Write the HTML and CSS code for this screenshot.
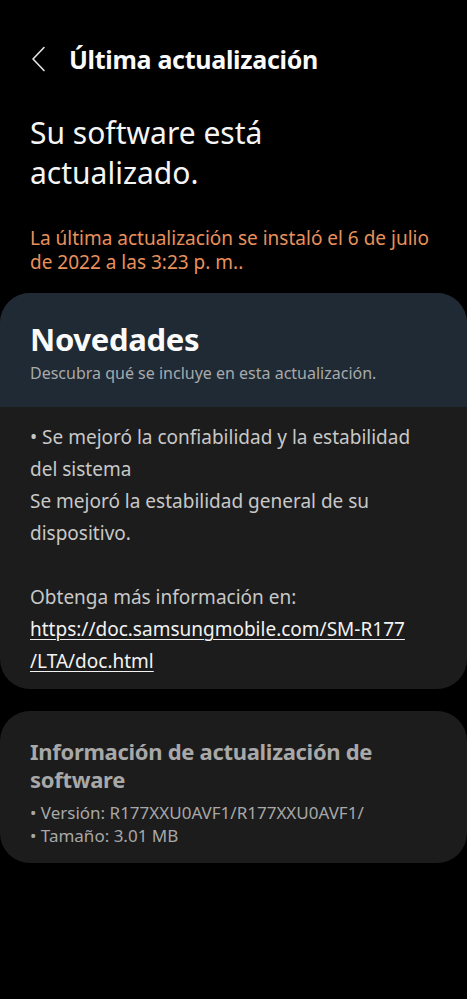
FILE: index.html
```html
<!DOCTYPE html>
<html lang="es">
<head>
<meta charset="utf-8">
<link rel="stylesheet" href="styles.css">
</head>
<body>
<div class="screen">
  <header class="appbar">
    <svg class="back" width="16" height="26" viewBox="0 0 16 26"><path d="M13 1.5 L2 13 L13 24.5" fill="none" stroke="#e6e6e6" stroke-width="1.6" stroke-linecap="round" stroke-linejoin="round"/></svg>
    <h1 class="title">Última actualización</h1>
  </header>
  <h2 class="headline">Su software está<br>actualizado.</h2>
  <p class="installed">La última actualización se instaló el 6 de julio de 2022 a las 3:23 p. m..</p>

  <section class="card news">
    <div class="news-head">
      <h3 class="news-title">Novedades</h3>
      <p class="news-sub">Descubra qué se incluye en esta actualización.</p>
    </div>
    <div class="news-body">
      <p>• Se mejoró la confiabilidad y la estabilidad del sistema<br>Se mejoró la estabilidad general de su dispositivo.</p>
      <p class="more">Obtenga más información en:<br><a class="link">https://doc.samsungmobile.com/SM-R177<br>/LTA/doc.html</a></p>
    </div>
  </section>

  <section class="card info">
    <h3 class="info-title">Información de actualización de software</h3>
    <ul class="info-list">
      <li>• Versión: R177XXU0AVF1/R177XXU0AVF1/</li>
      <li>• Tamaño: 3.01 MB</li>
    </ul>
  </section>
</div>
</body>
</html>
```
FILE: styles.css
```css
* { box-sizing: border-box; margin: 0; padding: 0; }
html, body { background: #000; }
body {
  width: 467px;
  height: 999px;
  overflow: hidden;
  font-family: "Noto Sans", "Open Sans", sans-serif;
  color: #fff;
}
.screen { display: flex; flex-direction: column; }
.appbar {
  display: flex;
  align-items: center;
  height: 42px;
  margin-top: 38px;
  padding-left: 31px;
  gap: 22px;
}
.back { flex: none; }
.title {
  font-size: 25px;
  font-weight: 700;
  letter-spacing: -0.3px;
  color: #fafafa;
}
.headline {
  margin-top: 33px;
  padding: 0 30px;
  font-size: 30px;
  line-height: 40px;
  font-weight: 400;
  color: #f5f5f5;
}
.installed {
  margin-top: 33px;
  padding: 0 30px;
  font-size: 19px;
  line-height: 24px;
  color: #e8915c;
}
.card {
  border-radius: 30px;
  overflow: hidden;
  background: #1c1c1c;
}
.news { margin-top: 19px; }
.news-head {
  background: #1f2a35;
  height: 114px;
  padding: 24px 30px 0;
}
.news-title {
  font-size: 31px;
  line-height: 44px;
  font-weight: 700;
  color: #fafafa;
  letter-spacing: -0.3px;
}
.news-sub {
  margin-top: 1px;
  font-size: 16px;
  line-height: 22px;
  color: #a7a9ab;
}
.news-body {
  padding: 14px 30px 12px;
  font-size: 19px;
  line-height: 32px;
  color: #c8c8c8;
}
.more { margin-top: 32px; }
.link {
  color: #f2f2f2;
  text-decoration: underline;
  text-underline-offset: 3px;
  text-decoration-thickness: 1px;
}
.info {
  margin-top: 22px;
  padding: 26px 30px 16px;
  height: 152px;
}
.info-title {
  font-size: 22px;
  line-height: 28px;
  font-weight: 700;
  color: #a8a8a8;
  letter-spacing: -0.3px;
}
.info-list {
  list-style: none;
  margin-top: 8px;
  font-size: 17px;
  line-height: 23px;
  color: #a8a8a8;
}
```
